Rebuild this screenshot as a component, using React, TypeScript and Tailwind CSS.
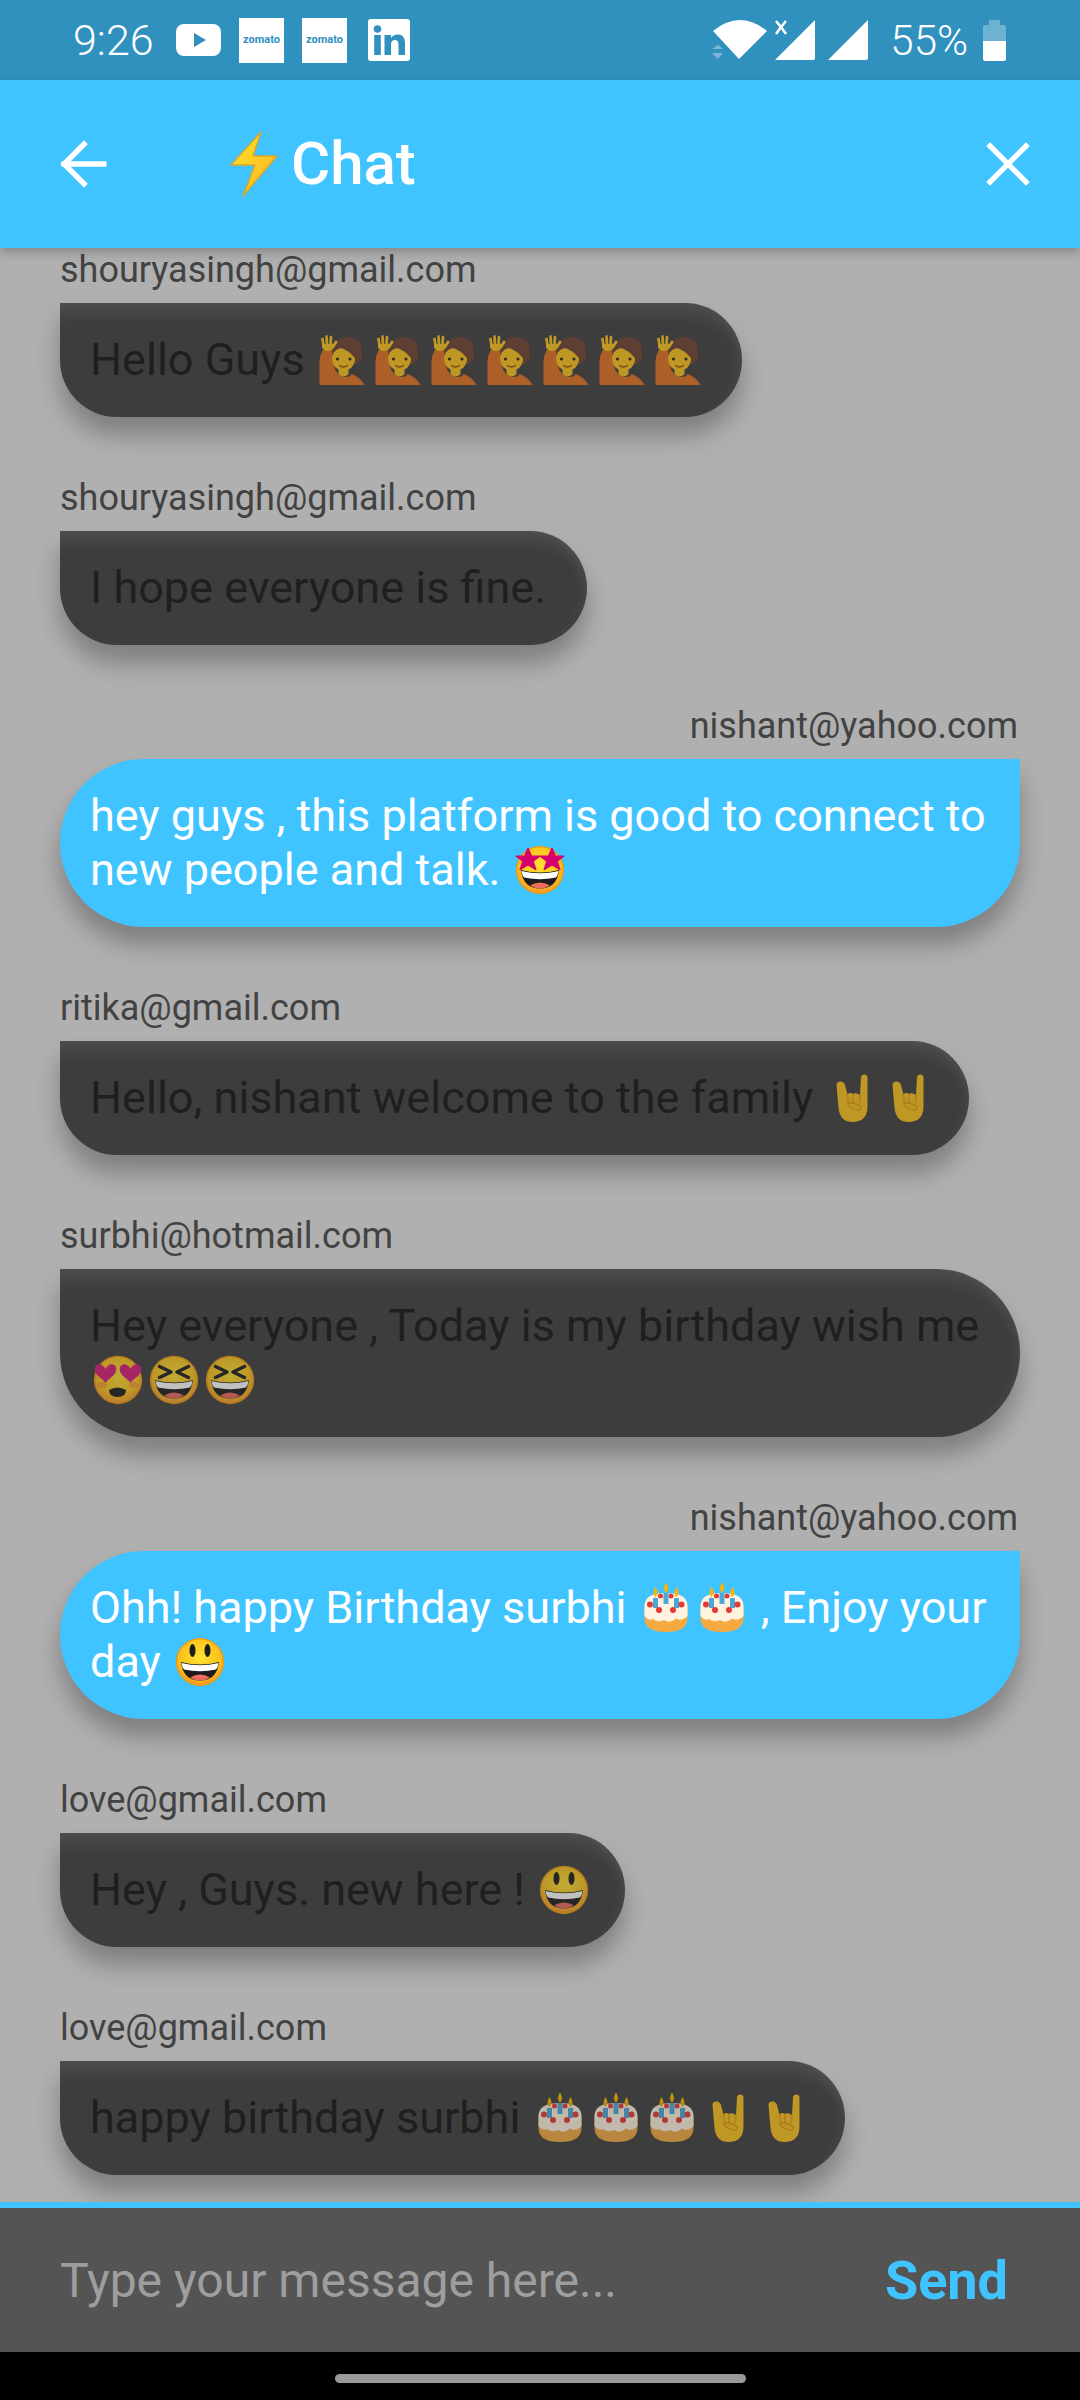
import { ArrowLeft, X } from "lucide-react";
import type { ReactNode } from "react";

const ROBOTO = "font-['Roboto',sans-serif]";

/** Shared wrapper so every emoji advances like a 45px Noto glyph. */
function Glyph({ dim, children }: { dim?: boolean; children: ReactNode }) {
  return (
    <svg
      viewBox="0 0 100 100"
      className={`inline-block w-[50px] h-[50px] mx-[3px] align-[-10px] ${dim ? "opacity-[.68]" : ""}`}
    >
      {children}
    </svg>
  );
}

function FaceBase() {
  return (
    <>
      <defs>
        <radialGradient id="faceFill" cx="50%" cy="40%" r="62%">
          <stop offset="0%" stopColor="#fde030" />
          <stop offset="70%" stopColor="#fcc21b" />
          <stop offset="100%" stopColor="#f79329" />
        </radialGradient>
      </defs>
      <circle cx="50" cy="50" r="47" fill="url(#faceFill)" stroke="#eb9a12" strokeWidth="2.5" />
    </>
  );
}

function OpenMouth() {
  return (
    <>
      <path d="M12 50 Q50 60 88 50 Q84 87 50 87 Q16 87 12 50Z" fill="#1c1c1c" />
      <path d="M13 52 Q50 61 87 52 Q86 61 82 65 Q50 72 18 65 Q14 61 13 52Z" fill="#fff" />
      <path d="M30 81 Q50 69 70 81 Q60 87 50 87 Q40 87 30 81Z" fill="#ed6c5f" />
    </>
  );
}

function Smile({ dim }: { dim?: boolean }) {
  return (
    <Glyph dim={dim}>
      <FaceBase />
      <ellipse cx="35" cy="27" rx="6" ry="13" fill="#1c1c1c" />
      <ellipse cx="65" cy="27" rx="6" ry="13" fill="#1c1c1c" />
      <OpenMouth />
    </Glyph>
  );
}

function Laugh({ dim }: { dim?: boolean }) {
  return (
    <Glyph dim={dim}>
      <FaceBase />
      <path d="M21 23 L44 34 L21 45M79 23 L56 34 L79 45" fill="none" stroke="#1c1c1c" strokeWidth="7" strokeLinecap="round" strokeLinejoin="round" />
      <OpenMouth />
    </Glyph>
  );
}

function HeartEyes({ dim }: { dim?: boolean }) {
  const heart = "M0 10 C-4 4 -20 0 -20 -10 C-20 -18 -6 -20 0 -10 C6 -20 20 -18 20 -10 C20 0 4 4 0 10Z";
  return (
    <Glyph dim={dim}>
      <FaceBase />
      <ellipse cx="18" cy="60" rx="10" ry="6" fill="#f48a3c" opacity="0.6" />
      <ellipse cx="82" cy="60" rx="10" ry="6" fill="#f48a3c" opacity="0.6" />
      <path d={heart} transform="translate(25 42) scale(1.08 1.4)" fill="#d81b78" />
      <path d={heart} transform="translate(75 42) scale(1.08 1.4)" fill="#d81b78" />
      <path d="M32 70 Q49 60 66 70 Q66 84 49 84 Q32 84 32 70Z" fill="#1c1c1c" />
    </Glyph>
  );
}

function StarStruck() {
  const star = "M0 -20 L6 -6 L21 -6 L9 3 L14 18 L0 9 L-14 18 L-9 3 L-21 -6 L-6 -6Z";
  return (
    <Glyph>
      <FaceBase />
      <path d={star} transform="translate(26 29) scale(1.1)" fill="#d6006e" stroke="#d6006e" strokeWidth="3" strokeLinejoin="round" />
      <path d={star} transform="translate(74 29) scale(1.1)" fill="#d6006e" stroke="#d6006e" strokeWidth="3" strokeLinejoin="round" />
      <OpenMouth />
    </Glyph>
  );
}

function Horns({ dim }: { dim?: boolean }) {
  return (
    <Glyph dim={dim}>
      <path
        d="M19 24 Q19 17 27 17 Q34 17 36 24 L41 43 Q46 38 52 42 Q58 38 66 44 L68 8 Q69 2 75 3 Q81 3 81 10 L81 68 Q80 98 51 98 Q26 98 23 70Z"
        fill="#fcc21b"
      />
      <path d="M41 43 L43 60 M52 42 L52 58 M66 44 L65 60 M40 62 Q54 56 68 68 Q72 74 60 74 Q50 72 42 64" fill="none" stroke="#e09a10" strokeWidth="2.5" strokeLinecap="round" />
    </Glyph>
  );
}

function Cake({ dim }: { dim?: boolean }) {
  return (
    <Glyph dim={dim}>
      <path d="M7 46 V70 Q7 98 50 98 Q93 98 93 70 V46Z" fill="#f6a940" />
      <path d="M7 46 Q7 20 50 20 Q93 20 93 46 V66 Q82 78 70 71 Q58 82 46 74 Q34 80 24 72 Q14 76 7 66Z" fill="#fff3df" />
      <circle cx="39" cy="26" r="5" fill="#e53935" />
      <circle cx="60" cy="26" r="5" fill="#e53935" />
      <rect x="24" y="30" width="10" height="20" fill="#4aa8d8" />
      <rect x="45" y="20" width="10" height="22" fill="#4aa8d8" />
      <rect x="66" y="30" width="10" height="20" fill="#4aa8d8" />
      <path d="M29 29 Q21 20 29 8 Q37 20 29 29ZM50 20 Q42 11 50 -1 Q58 11 50 20ZM71 29 Q63 20 71 8 Q79 20 71 29Z" fill="#ffb300" />
      <circle cx="18" cy="43" r="6" fill="#e53935" />
      <circle cx="81" cy="43" r="6" fill="#e53935" />
      <circle cx="36" cy="54" r="6" fill="#e53935" />
      <circle cx="64" cy="54" r="6" fill="#e53935" />
    </Glyph>
  );
}

function RaisedHand({ dim }: { dim?: boolean }) {
  return (
    <Glyph dim={dim}>
      <path d="M28 42 Q26 8 58 4 Q88 2 90 32 Q92 50 80 58 L60 58Z" fill="#6d4030" />
      <path d="M5 100 L5 52 Q6 38 12 30 L30 30 Q34 45 34 62 Q40 84 56 84 Q66 84 70 78 Q88 86 95 100Z" fill="#e2701f" />
      <path d="M43 68 H63 V78 Q53 88 43 78Z" fill="#fcc21b" />
      <circle cx="53" cy="48" r="23" fill="#fcc21b" />
      <path d="M29 46 Q32 28 48 26 Q62 30 76 46 Q80 22 60 14 Q34 12 29 46Z" fill="#6d4030" />
      <circle cx="41" cy="48" r="3.2" fill="#3a2410" />
      <circle cx="66" cy="48" r="3.2" fill="#3a2410" />
      <path d="M45 61 Q53 67 61 61" fill="none" stroke="#8a4a12" strokeWidth="2.5" strokeLinecap="round" />
      <path d="M13 22 L11 8 M20 20 L19 3 M27 20 L28 4 M32 24 L38 14" stroke="#fcc21b" strokeWidth="5.5" strokeLinecap="round" />
      <path d="M10 18 H34 L33 26 Q30 32 22 32 Q12 32 10 24Z" fill="#fcc21b" />
    </Glyph>
  );
}

function Bolt() {
  return (
    <svg viewBox="0 0 48 66" className="w-[48px] h-[66px]">
      <defs>
        <linearGradient id="boltFill" x1="0" y1="0" x2="1" y2="1">
          <stop offset="0%" stopColor="#ffe72e" />
          <stop offset="100%" stopColor="#fbb01e" />
        </linearGradient>
      </defs>
      <path d="M31 1 L1 34 L25 34 L13 65 L47 25 L23 25Z" fill="url(#boltFill)" stroke="#d9a82a" strokeWidth="1.5" strokeLinejoin="round" />
    </svg>
  );
}

function Label({ children, right }: { children: ReactNode; right?: boolean }) {
  return (
    <p className={`text-[36px] leading-[42px] mb-[12px] text-[#424242] ${right ? "text-right mr-[2px]" : ""}`}>
      {children}
    </p>
  );
}

/** Someone else's message: sits left, dark, with the square corner top-left. */
function Incoming({ from, children }: { from: string; children: ReactNode }) {
  return (
    <div className="flex flex-col items-start">
      <Label>{from}</Label>
      <div className="px-[30px] py-[30px] text-[45px] leading-[54px] text-[#1f1f1f] bg-[#3d3d3d] rounded-tr-[90px] rounded-br-[90px] rounded-bl-[90px] shadow-[inset_0_20px_18px_-12px_rgba(255,255,255,0.1),inset_-12px_0_14px_-10px_rgba(255,255,255,0.06),0_18px_24px_rgba(0,0,0,0.28)]">
        {children}
      </div>
    </div>
  );
}

function Outgoing({ from, children }: { from: string; children: ReactNode }) {
  return (
    <div className="flex flex-col items-stretch">
      <Label right>{from}</Label>
      <div className="px-[30px] py-[30px] text-[45px] leading-[54px] text-white bg-[#40c4ff] rounded-tl-[90px] rounded-br-[90px] rounded-bl-[90px] shadow-[0_18px_24px_rgba(0,0,0,0.28)]">
        {children}
      </div>
    </div>
  );
}

function Zomato({ className }: { className: string }) {
  return (
    <div className={`w-[45px] h-[45px] bg-white flex items-center justify-center text-[#3091bf] text-[11px] font-bold ${className}`}>
      zomato
    </div>
  );
}

function StatusBar() {
  return (
    <div className="h-[80px] bg-[#3091bf] flex items-center pl-[73px] pr-[74px] text-white text-[42px]">
      <span className="w-[103px] font-light text-[43px]">9:26</span>
      <svg viewBox="0 0 45 32" className="w-[45px] h-[32px] mr-[18px]">
        <rect width="45" height="32" rx="8" fill="#fff" />
        <path d="M18 9 L30 16 L18 23Z" fill="#3091bf" />
      </svg>
      <Zomato className="mr-[18px]" />
      <Zomato className="mr-[21px]" />
      <svg viewBox="0 0 42 42" className="w-[42px] h-[42px]">
        <rect width="42" height="42" rx="3" fill="#fff" />
        <circle cx="9.5" cy="10" r="3.8" fill="#3091bf" />
        <rect x="6.2" y="16" width="6.6" height="20" fill="#3091bf" />
        <path d="M16.5 16 H23 V19 Q25 15.5 30 15.5 Q37 15.5 37 24 V36 H30.5 V25.5 Q30.5 21 27 21 Q23 21 23 25.5 V36 H16.5Z" fill="#3091bf" />
      </svg>
      <div className="flex-1" />
      <svg viewBox="0 0 56 40" className="w-[56px] h-[40px] mr-[7px]">
        <path d="M1 11 Q28 -11 55 11 L27 39Z" fill="#fff" />
        <path d="M0 29 L6 25 L11 29ZM0 33 L11 33 L6 39Z" fill="#fff" opacity="0.35" />
      </svg>
      <svg viewBox="0 0 40 40" className="w-[40px] h-[40px] mr-[13px]">
        <path d="M40 0 V38 Q40 40 38 40 H0Z" fill="#fff" />
        <path d="M1 1 L6 7 L11 1 M11 14 L6 7 L1 14" fill="none" stroke="#fff" strokeWidth="2.5" />
      </svg>
      <svg viewBox="0 0 40 40" className="w-[40px] h-[40px] mr-[22px]">
        <path d="M40 0 V38 Q40 40 38 40 H0Z" fill="#fff" />
      </svg>
      <span className="font-light mr-[15px]">55%</span>
      <div className="flex flex-col items-center w-[23px] h-[41px]">
        <div className="w-[11px] h-[5px] bg-white/30" />
        <div className="w-[23px] h-[36px] rounded-[2px] overflow-hidden flex flex-col">
          <div className="h-[16px] bg-white/30" />
          <div className="flex-1 bg-white" />
        </div>
      </div>
    </div>
  );
}

// Emoji lines run a few px wider in the original than the glyph boxes add up to.
const Tail = () => <span className="ml-[3px]" />;

export default function App() {
  return (
    <div className={`w-[1080px] h-[2400px] flex flex-col overflow-hidden bg-black ${ROBOTO}`}>
      <StatusBar />
      <header className="relative z-10 h-[168px] shrink-0 bg-[#40c4ff] flex items-center pl-[50px] pr-[36px] text-white shadow-[0_4px_10px_rgba(0,0,0,0.25)]">
        <ArrowLeft className="w-[68px] h-[68px]" strokeWidth={1.9} strokeLinecap="square" strokeLinejoin="miter" />
        <div className="ml-[112px] flex items-center gap-[13px]">
          <Bolt />
          <span className="text-[60px] font-medium leading-none">Chat</span>
        </div>
        <div className="flex-1" />
        <X className="w-[72px] h-[72px]" strokeWidth={1.8} strokeLinecap="square" />
      </header>

      <main className="h-[1954px] shrink-0 overflow-hidden bg-[#b0b0b0] px-[60px] pt-px flex flex-col gap-[60px]">
        <Incoming from="shouryasingh@gmail.com">
          Hello Guys<span className="ml-[9px]" />
          {[0, 1, 2, 3, 4, 5, 6].map((i) => (
            <RaisedHand key={i} dim />
          ))}
          <span className="ml-[6px]" />
        </Incoming>
        <Incoming from="shouryasingh@gmail.com">{"I hope everyone is fine.\u00a0"}</Incoming>
        <Outgoing from="nishant@yahoo.com">
          hey guys , this platform is good to connect to new people and talk. <StarStruck />
        </Outgoing>
        <Incoming from="ritika@gmail.com">
          Hello, nishant welcome to the family <Horns dim />
          <Horns dim />
          <Tail />
        </Incoming>
        <Incoming from="surbhi@hotmail.com">
          Hey everyone , Today is my birthday wish me <HeartEyes dim />
          <Laugh dim />
          <Laugh dim />
        </Incoming>
        <Outgoing from="nishant@yahoo.com">
          Ohh! happy Birthday surbhi <Cake />
          <Cake /> , Enjoy your day <Smile />
        </Outgoing>
        <Incoming from="love@gmail.com">
          Hey , Guys. new here ! <Smile dim />
          <Tail />
        </Incoming>
        <Incoming from="love@gmail.com">
          happy birthday surbhi <Cake dim />
          <Cake dim />
          <Cake dim />
          <Horns dim />
          <Horns dim />
          <Tail />
        </Incoming>
      </main>

      <div className="h-[150px] shrink-0 border-t-[6px] border-[#40c4ff] bg-[#545454] flex items-center justify-between pl-[60px] pr-[72px]">
        <span className="text-[48px] text-[#9e9e9e] pt-[2px]">Type your message here...</span>
        <span className="text-[54px] font-bold text-[#40c4ff]">Send</span>
      </div>

      <div className="flex-1 flex items-center justify-center pt-[5px]">
        <div className="w-[411px] h-[9px] rounded-full bg-[#999999]" />
      </div>
    </div>
  );
}
